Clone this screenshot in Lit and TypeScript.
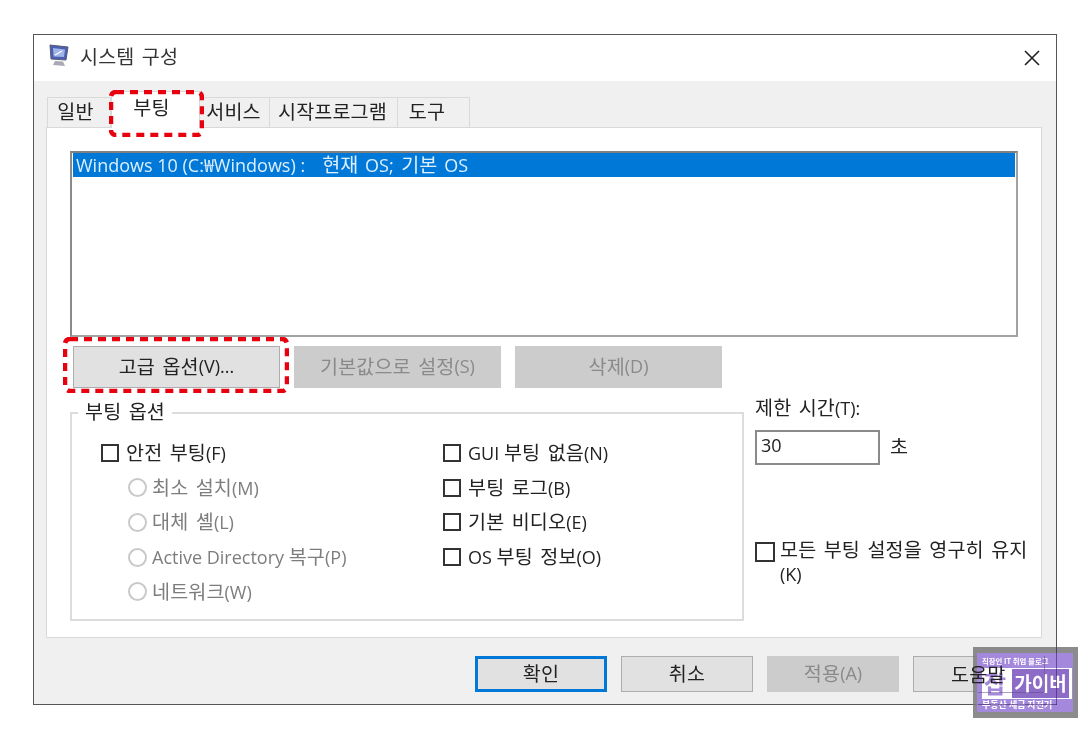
import { LitElement, html, css } from "lit";
import { customElement } from "lit/decorators.js";

const k = (t: string) => {
  const out: unknown[] = [];
  let last = 0;
  for (const m of t.matchAll(/[가-힣](?:[가-힣 ]*[가-힣])?/g)) {
    out.push(t.slice(last, m.index));
    out.push(html`<span class="k">${m[0]}</span>`);
    last = (m.index as number) + m[0].length;
  }
  out.push(t.slice(last));
  return out;
};

@customElement("app-root")
export class AppRoot extends LitElement {
  static styles = css`
    :host { display: block; width: 1090px; height: 738px; background: #fff; overflow: hidden; position: relative;
      font-family: "Open Sans", "Noto Sans CJK KR", sans-serif; font-size: 18px; color: #222; }
    * { box-sizing: border-box; }
    .k { font-family: "Noto Sans CJK KR", sans-serif; font-size: 19.6px; word-spacing: 3px; letter-spacing: 0.1px; }
    .page { padding: 34px 0 0 33px; filter: blur(0.45px); }
    .win { width: 1024px; height: 671px; border: 1px solid #555; background: #f0f0f0; display: flex; flex-direction: column; }
    .title { height: 46px; background: #fff; display: flex; align-items: center; padding: 0 14px 5px; flex: none; }
    .title svg.ic { width: 22px; height: 26px; margin-right: 10px; }
    .title .t { flex: 1; color: #333; }
    .x { width: 18px; height: 18px; margin: 5px 1px 0 0; }
    .tabs { display: flex; height: 46px; padding: 16px 0 0 13px; flex: none; }
    .tab { height: 30px; border: 1px solid #d9d9d9; border-bottom: 0; border-left: 0; background: #f0f0f0; display: flex; align-items: center; justify-content: center; padding-bottom: 4px; white-space: nowrap; }
    .tab:first-child { border-left: 1px solid #d9d9d9; }
    .tab.w1 { width: 64px; padding-right: 7px; }
    .tab.w2 { width: 70px; padding-right: 2px; }
    .tab.w3 { width: 128px; padding-right: 2px; }
    .tab.w4 { width: 72px; padding-right: 13px; }
    .tab.on { background: #fff; width: 89px; padding: 0 8px 8px 0; border: 1px solid #d9d9d9; border-bottom: 0; position: relative; z-index: 1; margin: -6px 0 -1px; height: 37px; }
    .panel { margin-left: 12px; width: 996px; height: 511px; background: #fff; border: 1px solid #d9d9d9; padding: 23px 23px 0; flex: none; }
    .list { width: 948px; height: 186px; border: 2px solid #a2a2a2; border-top-color: #808080; border-left-color: #8a8a8a; padding: 0 1px; }
    .sel { height: 24px; background: #0078d7; color: #dcefff; line-height: 21px; padding-left: 3px; white-space: nowrap; }
    .sel .k { margin-right: 2px; }
    .sel .k.m1 { margin-left: 17px; }
    .sel .k.m2 { margin-left: 0; }
    .btns { display: flex; gap: 14px; padding: 9px 0 0 3px; }
    .btn { width: 207px; height: 42px; border: 1px solid #adadad; background: #e1e1e1; display: flex; align-items: center; justify-content: center; padding-bottom: 3px; white-space: nowrap; color: #222; }
    .btn.off { background: #cccccc; border-color: #cccccc; color: #8a8a8a; }
    .lower { display: flex; padding-top: 24px; }
    .group { width: 674px; height: 209px; flex: none; border: 2px solid #dcdcdc; padding-left: 29px; position: relative; }
    .legend { position: absolute; left: 6px; top: -16px; background: #fff; padding: 0 7px; line-height: 26px; white-space: nowrap; }
    .cols { display: flex; padding-top: 22px; }
    .col { display: flex; flex-direction: column; }
    .col.a { width: 342px; }
    .row { height: 34.6px; display: flex; align-items: center; white-space: nowrap; }
    .row > .tx { padding-bottom: 3px; }
    .row.dis { padding-left: 27px; color: #7d7d7d; }
    .cb { width: 18px; height: 18px; border: 2px solid #333; background: #fff; margin-right: 7px; flex: none; }
    .rd { width: 19px; height: 19px; border: 2px solid #c9c9c9; border-radius: 50%; background: #fff; margin-right: 5px; flex: none; }
    .side { margin-left: 11px; flex: none; }
    .lim { margin-top: -17px; line-height: 24px; white-space: nowrap; }
    .inrow { display: flex; align-items: center; margin-top: 10px; gap: 10px; }
    .inrow > span { padding-bottom: 4px; }
    .input { width: 125px; height: 35px; border: 2px solid #8a8a8a; padding-left: 4px; line-height: 27px; }
    .keep { display: flex; margin-top: 72px; line-height: 24px; white-space: nowrap; }
    .keep .cb { width: 20px; height: 20px; margin: 5px 5px 0 0; }
    .foot { display: flex; gap: 14px; padding: 18px 0 0 441px; }
    .foot .btn { width: 132px; height: 36px; }
    .foot .ok { border: 3px solid #0078d7; }
    .hl { position: absolute; filter: blur(0.5px); pointer-events: none; fill: none; stroke: #e8000f; stroke-width: 4.5; stroke-dasharray: 8 6; }
    .hl.a { left: 109px; top: 90px; width: 95px; height: 47px; }
    .hl.b { left: 63px; top: 337px; width: 226px; height: 56px; }
    .wm { position: absolute; left: 973px; top: 647px; width: 105px; height: 71px; padding: 6px 5px 6px 4px; background: rgba(120,120,120,.85); color: #fff; font-weight: 700; font-family: "Noto Sans CJK KR", sans-serif; filter: blur(0.5px); }
    .wm .in { height: 100%; background: #a488dc; padding-left: 5px; display: flex; flex-direction: column; }
    .wm .s { font-size: 7.4px; line-height: 15px; white-space: nowrap; }
    .wm .b { font-size: 9px; line-height: 12px; white-space: nowrap; }
    .wm .m { width: 90px; height: 31px; background: #fff; display: flex; align-items: center; padding: 0 3px 1px 2px; }
    .wm .j { font-size: 24px; color: #a488dc; line-height: 30px; width: 28px; flex: none; }
    .wm .g { flex: 1; height: 29px; background: #8d6cc8; color: #fff; font-size: 19px; line-height: 27px; text-align: center; white-space: nowrap; }
    .ghost { position: absolute; left: 951px; top: 659px; color: #222; pointer-events: none; white-space: nowrap; filter: blur(0.5px); }
    .line { position: absolute; background: rgba(60,30,110,.6); }
    .line.v { left: 1056px; top: 647px; width: 1px; height: 58px; }
    .line.h { left: 978px; top: 704px; width: 79px; height: 1px; }
    .line.v2 { left: 1044px; top: 656px; width: 1px; height: 36px; background: rgba(90,70,130,.5); }
    .line.h2 { left: 978px; top: 692px; width: 66px; height: 1px; background: rgba(90,70,130,.5); }
  `;

  private cb(t: string) { return html`<div class="row"><span class="cb"></span><span class="tx">${k(t)}</span></div>`; }
  private rd(t: string) { return html`<div class="row dis"><span class="rd"></span><span class="tx">${k(t)}</span></div>`; }

  render() {
    return html`
      <div class="page">
        <div class="win">
          <div class="title">
            <svg class="ic" viewBox="0 0 22 26">
              <path d="M2 2 L20 4 L18 17 L3 16 Z" fill="#4a5fb0" stroke="#5b5b78" stroke-width="1"/>
              <path d="M5 5 L17 6.5 L16 14 L5.5 13.5 Z" fill="#9fb4ea"/>
              <path d="M7 12 L14 8" stroke="#fff" stroke-width="1.2"/>
              <path d="M7 18 L15 18.5 L17 23 L5 22 Z" fill="#a9a9b4"/>
            </svg>
            <span class="t">${k("시스템 구성")}</span>
            <svg class="x" viewBox="0 0 18 18"><path d="M2 2 L16 16 M16 2 L2 16" stroke="#222" stroke-width="1.6" fill="none"/></svg>
          </div>
          <div class="tabs">
            <div class="tab w1">${k("일반")}</div>
            <div class="tab on">${k("부팅")}</div>
            <div class="tab w2">${k("서비스")}</div>
            <div class="tab w3">${k("시작프로그램")}</div>
            <div class="tab w4">${k("도구")}</div>
          </div>
          <div class="panel">
            <div class="list"><div class="sel">Windows 10 (C:₩Windows) :<span class="k m1">현재</span> OS;<span class="k m2"> 기본</span> OS</div></div>
            <div class="btns">
              <div class="btn">${k("고급 옵션(V)...")}</div>
              <div class="btn off">${k("기본값으로 설정(S)")}</div>
              <div class="btn off">${k("삭제(D)")}</div>
            </div>
            <div class="lower">
              <div class="group">
                <div class="legend">${k("부팅 옵션")}</div>
                <div class="cols">
                  <div class="col a">
                    ${this.cb("안전 부팅(F)")}
                    ${this.rd("최소 설치(M)")}
                    ${this.rd("대체 셸(L)")}
                    ${this.rd("Active Directory 복구(P)")}
                    ${this.rd("네트워크(W)")}
                  </div>
                  <div class="col">
                    ${this.cb("GUI 부팅 없음(N)")}
                    ${this.cb("부팅 로그(B)")}
                    ${this.cb("기본 비디오(E)")}
                    ${this.cb("OS 부팅 정보(O)")}
                  </div>
                </div>
              </div>
              <div class="side">
                <div class="lim">${k("제한 시간(T):")}</div>
                <div class="inrow"><div class="input">30</div><span>${k("초")}</span></div>
                <div class="keep"><span class="cb"></span><span>${k("모든 부팅 설정을 영구히 유지")}<br>(K)</span></div>
              </div>
            </div>
          </div>
          <div class="foot">
            <div class="btn ok">${k("확인")}</div>
            <div class="btn">${k("취소")}</div>
            <div class="btn off">${k("적용(A)")}</div>
            <div class="btn"></div>
          </div>
        </div>
      </div>
      <svg class="hl a" viewBox="0 0 95 47"><rect x="2" y="2" width="91" height="43" rx="5"/></svg>
      <svg class="hl b" viewBox="0 0 226 56"><rect x="2" y="2" width="222" height="52" rx="5"/></svg>
      <div class="wm">
        <div class="in">
          <div class="s">직장인 IT 취업 블로그</div>
          <div class="m"><span class="j">잡</span><span class="g">가이버</span></div>
          <div class="b">부동산 세금 자전거</div>
        </div>
      </div>
      <div class="line v"></div><div class="line h"></div><div class="line v2"></div><div class="line h2"></div>
      <div class="ghost">${k("도움말")}</div>
    `;
  }
}
